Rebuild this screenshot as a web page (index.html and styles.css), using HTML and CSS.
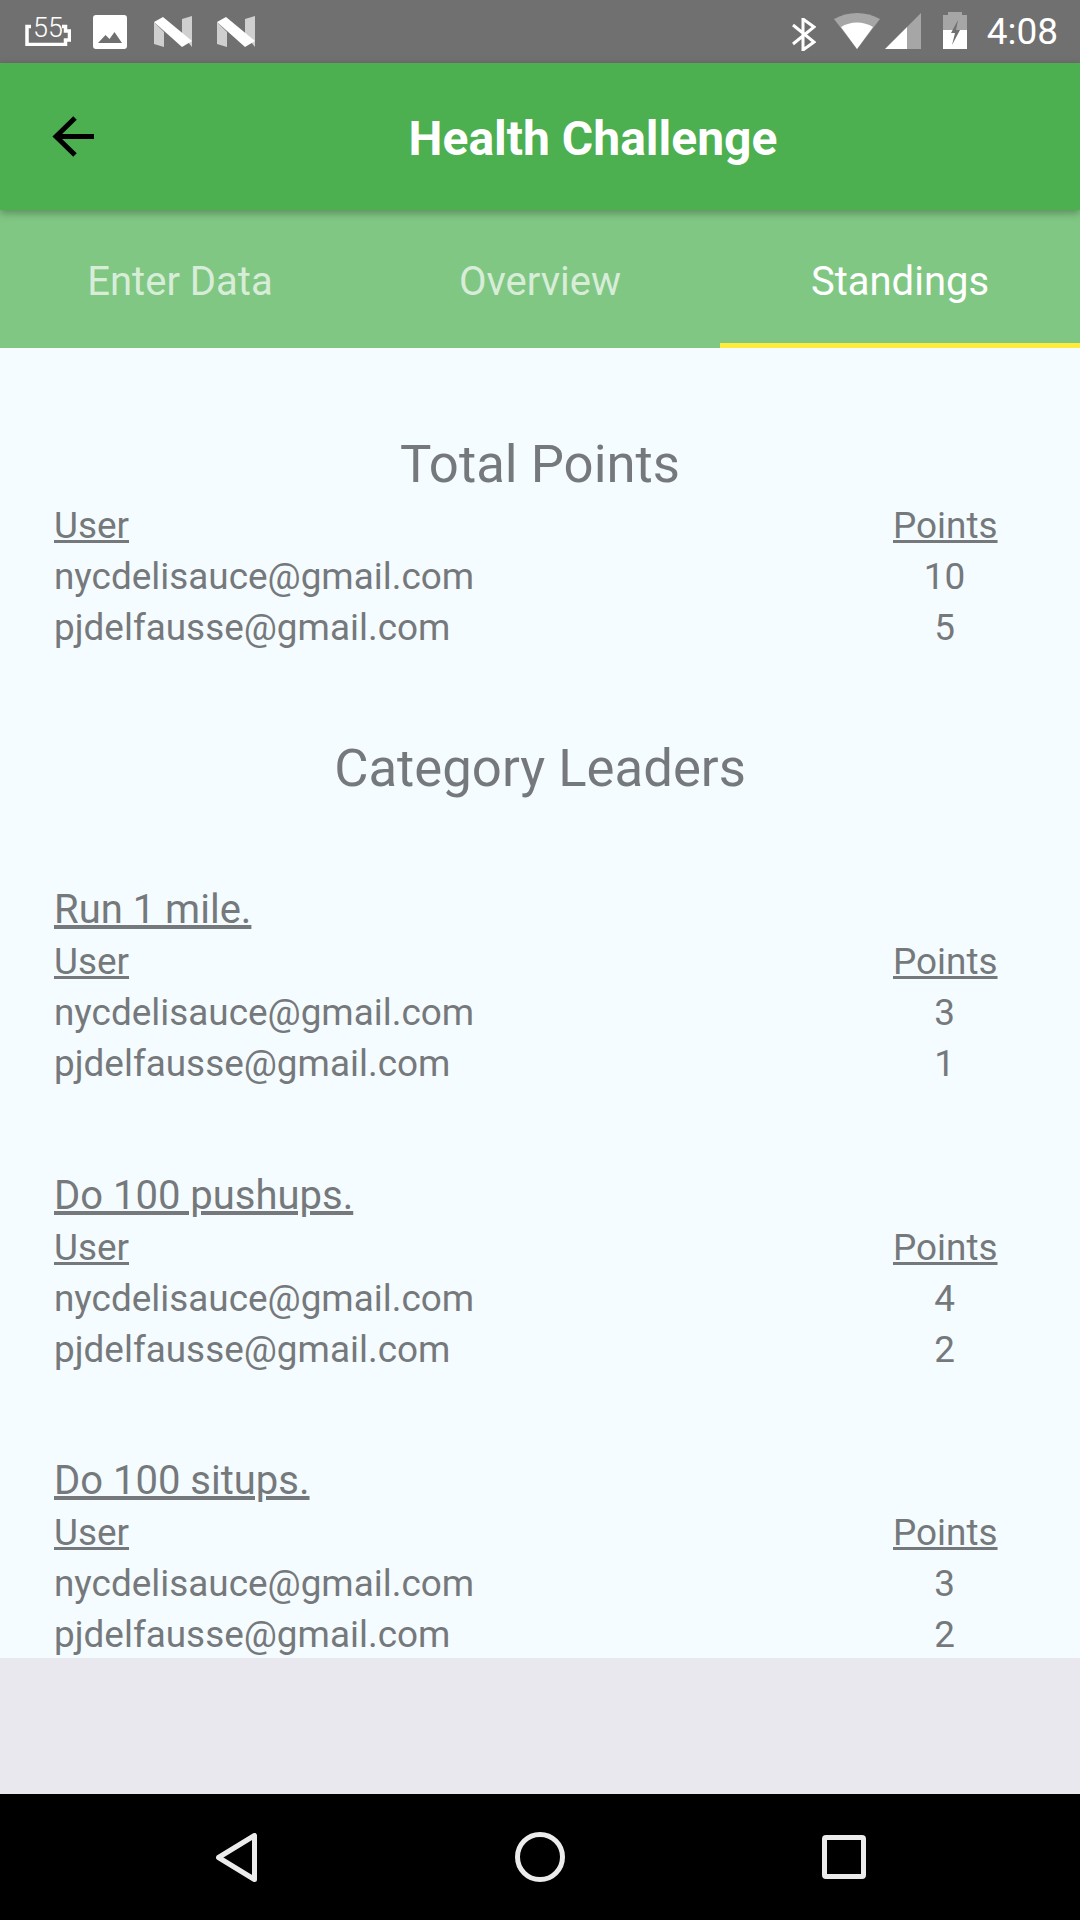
FILE: index.html
```html
<!DOCTYPE html>
<html lang="en">
<head>
<meta charset="utf-8">
<title>Health Challenge</title>
<link rel="stylesheet" href="styles.css">
</head>
<body>
<div class="phone">
  <header class="status">
    <div class="bat55">
      <svg class="ic-bat55" viewBox="0 0 46 27"><path d="M6 7.500H2V25.500H40.500V21H44.500V12H40.500V7.500H37" fill="none" stroke="#fff" stroke-width="3.500"/></svg>
      <span class="bat-num">55</span>
    </div>
    <svg class="ic-image" viewBox="0 0 34 34"><path fill="#fff" fill-rule="evenodd" d="M3 0H31a3 3 0 0 1 3 3V31a3 3 0 0 1-3 3H3a3 3 0 0 1-3-3V3A3 3 0 0 1 3 0ZM5 28H29L21.500 17 16.500 24 12.500 20Z"/></svg>
    <svg class="ic-n" viewBox="0 0 38 31"><path fill="#cfcfcf" d="M0 6 10 16V31L0 28ZM28 3 38 0V31L28 19Z"/><path fill="#fff" d="M0 6 9 1 38 25 28 31Z"/></svg>
    <svg class="ic-n ic-n2" viewBox="0 0 38 31"><path fill="#cfcfcf" d="M0 6 10 16V31L0 28ZM28 3 38 0V31L28 19Z"/><path fill="#fff" d="M0 6 9 1 38 25 28 31Z"/></svg>
    <span class="status-space"></span>
    <svg class="ic-bt" viewBox="0 0 25 33"><path fill="none" stroke="#fff" stroke-width="3" d="M2 7 23 24 12 32V1L23 9 2 26"/></svg>
    <svg class="ic-wifi" viewBox="0 0 46 36"><path fill="#a6a6a6" d="M0 6C14-2 32-2 46 6L23 36Z"/><path fill="#fff" d="M7 14C16 8 30 8 39 14L23 36Z"/></svg>
    <svg class="ic-signal" viewBox="0 0 36 36"><path fill="#a6a6a6" d="M36 0V36H22V14Z"/><path fill="#fff" d="M22 14V36H0Z"/></svg>
    <svg class="ic-bat" viewBox="0 0 24 37"><path fill="#a6a6a6" d="M5 0H19V3H24V37H0V3H5Z"/><path fill="#fff" d="M0 18H24V37H0Z"/><path fill="#707070" d="M15 8 8 21H12L9 33 17 18H13Z"/></svg>
    <span class="clock">4:08</span>
  </header>

  <div class="appbar">
    <svg class="ic-back" viewBox="0 0 42 42"><path fill="none" stroke="#000" stroke-width="5" d="M42 20.500H5M23 2 4 20.500 23 39"/></svg>
    <h1 class="appbar-title">Health Challenge</h1>
  </div>

  <nav class="tabs">
    <div class="tab">Enter Data</div>
    <div class="tab">Overview</div>
    <div class="tab tab-active">Standings</div>
  </nav>

  <main class="content">
    <h2 class="heading">Total Points</h2>
    <div class="table">
      <div class="row"><span class="u">User</span><span class="pts u">Points</span></div>
      <div class="row"><span>nycdelisauce@gmail.com</span><span class="pts">10</span></div>
      <div class="row"><span>pjdelfausse@gmail.com</span><span class="pts">5</span></div>
    </div>

    <h2 class="heading heading-gap">Category Leaders</h2>

    <section class="category">
      <h3 class="cat-title">Run 1 mile.</h3>
      <div class="row"><span class="u">User</span><span class="pts u">Points</span></div>
      <div class="row"><span>nycdelisauce@gmail.com</span><span class="pts">3</span></div>
      <div class="row"><span>pjdelfausse@gmail.com</span><span class="pts">1</span></div>
    </section>

    <section class="category">
      <h3 class="cat-title">Do 100 pushups.</h3>
      <div class="row"><span class="u">User</span><span class="pts u">Points</span></div>
      <div class="row"><span>nycdelisauce@gmail.com</span><span class="pts">4</span></div>
      <div class="row"><span>pjdelfausse@gmail.com</span><span class="pts">2</span></div>
    </section>

    <section class="category">
      <h3 class="cat-title">Do 100 situps.</h3>
      <div class="row"><span class="u">User</span><span class="pts u">Points</span></div>
      <div class="row"><span>nycdelisauce@gmail.com</span><span class="pts">3</span></div>
      <div class="row"><span>pjdelfausse@gmail.com</span><span class="pts">2</span></div>
    </section>
  </main>

  <div class="footer-space"></div>

  <footer class="navbar">
    <div class="nav-cell"><svg class="ic-nav-back" viewBox="0 0 41 49"><path fill="none" stroke="#ececec" stroke-width="5" stroke-linejoin="round" d="M38.500 2.500V46.500L2.500 24.500Z"/></svg></div>
    <div class="nav-cell"><svg class="ic-nav-home" viewBox="0 0 50 50"><circle cx="25" cy="25" r="22.500" fill="none" stroke="#ececec" stroke-width="5"/></svg></div>
    <div class="nav-cell"><svg class="ic-nav-recent" viewBox="0 0 44 44"><rect x="2.500" y="2.500" width="39" height="39" rx="1.500" fill="none" stroke="#ececec" stroke-width="5"/></svg></div>
  </footer>
</div>
</body>
</html>
```

FILE: styles.css
```css
* { box-sizing: border-box; }
html, body { margin: 0; padding: 0; }
body { font-family: Roboto, "Noto Sans", sans-serif; }

.phone {
  width: 1080px;
  height: 1920px;
  display: flex;
  flex-direction: column;
  overflow: hidden;
  background: #e9e8ee;
}

/* status bar */
.status {
  height: 63px;
  flex: none;
  background: #707070;
  display: flex;
  align-items: center;
  padding: 0 22px 0 25px;
}
.status svg { flex: none; display: block; }
.bat55 { position: relative; width: 46px; height: 27px; margin-top: 1px; flex: none; }
.bat-num {
  position: absolute;
  left: 8px;
  top: -4px;
  color: #fff;
  font-size: 27px;
  font-weight: 300;
  line-height: 27px;
}
.ic-bat55 { width: 46px; height: 27px; }
.ic-image { width: 34px; height: 34px; margin-left: 22px; }
.ic-n { width: 38px; height: 31px; margin-left: 27px; }
.ic-n2 { margin-left: 25px; }
.status-space { flex: 1; }
.ic-bt { width: 25px; height: 33px; margin-top: 5px; }
.ic-wifi { width: 46px; height: 36px; margin-left: 18px; margin-top: -2px; }
.ic-signal { width: 36px; height: 36px; margin-left: 5px; margin-top: -1px; }
.ic-bat { width: 24px; height: 37px; margin-left: 22px; margin-top: -2px; }
.clock { color: #fff; font-size: 37px; line-height: 40px; margin-left: 20px; }

/* app bar */
.appbar {
  height: 147px;
  flex: none;
  background: #4caf50;
  display: flex;
  align-items: center;
  padding-left: 52px;
  position: relative;
  z-index: 1;
  box-shadow: 0 3px 8px rgba(0, 0, 0, 0.3);
}
.ic-back { width: 42px; height: 42px; flex: none; }
.appbar-title {
  flex: 1;
  margin: 5px 0 0 12px;
  text-align: center;
  color: #fff;
  font-size: 48px;
  font-weight: 700;
  line-height: 56px;
}

/* tabs */
.tabs {
  height: 138px;
  flex: none;
  display: flex;
  background: #81c784;
}
.tab {
  flex: 1;
  display: flex;
  align-items: center;
  justify-content: center;
  padding-top: 10px;
  font-size: 40px;
  color: rgba(255, 255, 255, 0.7);
  border-bottom: 5px solid transparent;
}
.tab-active { color: #fff; border-bottom-color: #ffeb3b; }

/* standings */
.content {
  height: 1310px;
  flex: none;
  overflow: hidden;
  background: #f5fcff;
  padding: 81px 84px 0 54px;
  color: #75797c;
}
.heading {
  margin: 0 -30px 0 0;
  text-align: center;
  font-size: 52.700px;
  font-weight: 400;
  line-height: 71px;
}
.heading-gap { margin-top: 80px; }
.row {
  display: grid;
  grid-template-columns: 1fr 103px;
  font-size: 36.900px;
  line-height: 51px;
}
.pts { text-align: center; }
.u { text-decoration: underline; }
.category { margin-top: 80px; }
.category + .category { margin-top: 80.500px; }
.cat-title {
  margin: 0;
  font-size: 40px;
  font-weight: 400;
  line-height: 52px;
  text-decoration: underline;
}

.footer-space { flex: 1; }

/* system nav */
.navbar {
  height: 126px;
  flex: none;
  background: #000;
  display: flex;
  justify-content: center;
  align-items: center;
}
.nav-cell { width: 304px; display: flex; justify-content: center; }
.ic-nav-back { width: 41px; height: 49px; }
.ic-nav-home { width: 50px; height: 50px; }
.ic-nav-recent { width: 44px; height: 44px; }
```
